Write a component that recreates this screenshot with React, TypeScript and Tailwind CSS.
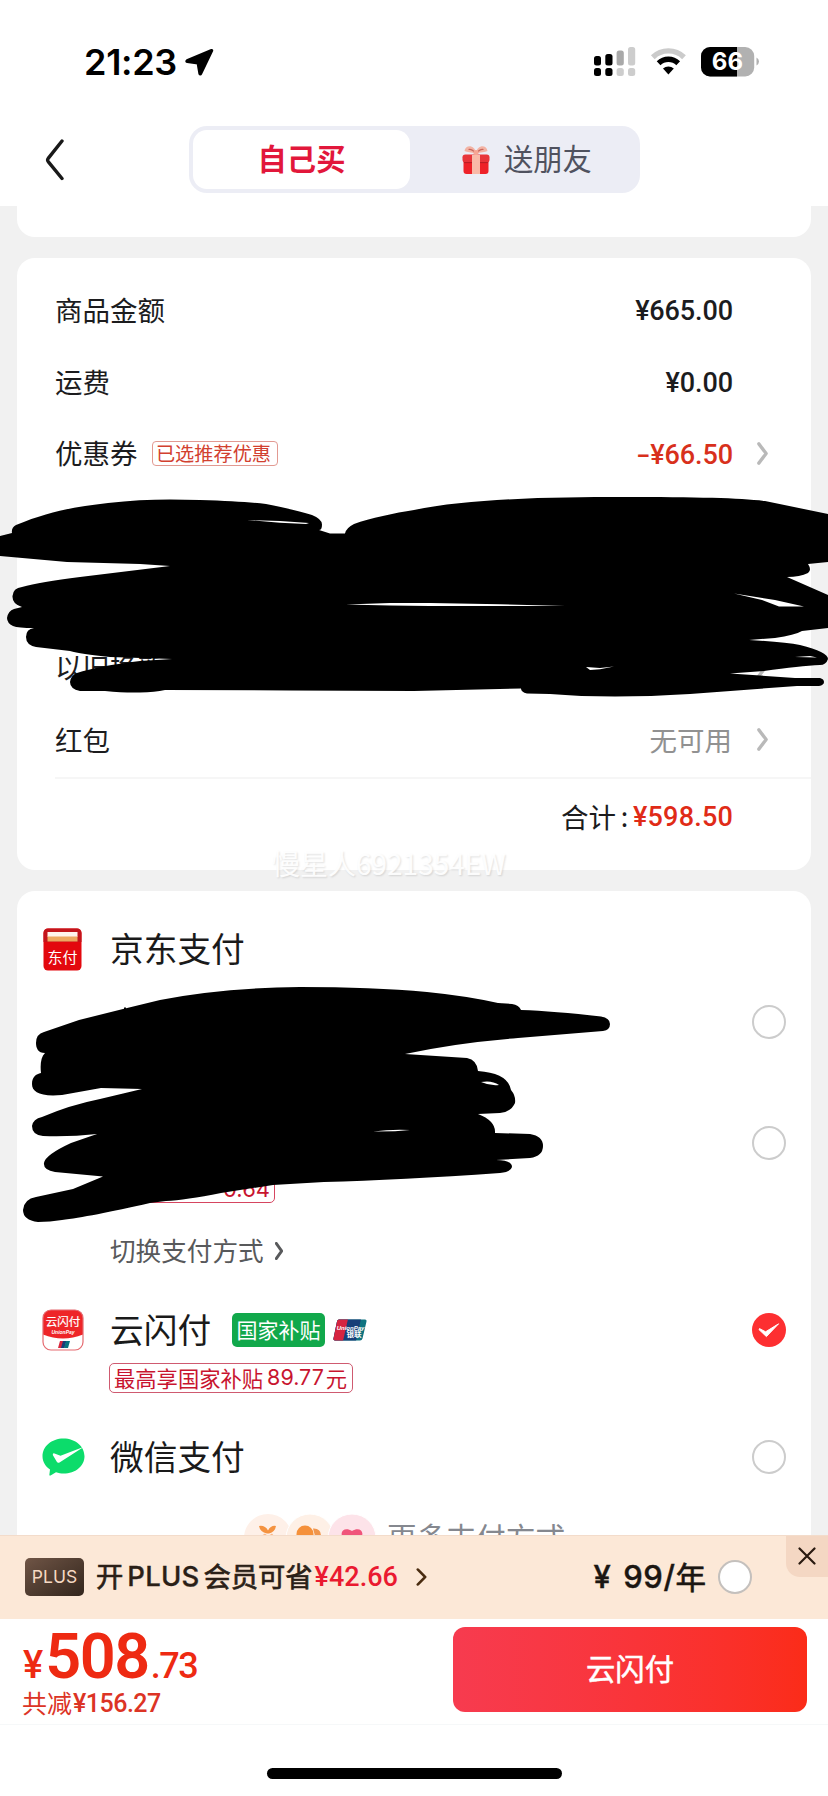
import React from "react";

const CJK = "font-['Noto_Sans_CJK_SC',sans-serif]";
const NUM = "font-['Roboto','Noto_Sans_CJK_SC',sans-serif]";

function Radio({ checked = false }: { checked?: boolean }) {
  if (checked) {
    return (
      <svg className="h-[34px] w-[34px] shrink-0" viewBox="0 0 34 34">
        <circle cx="17" cy="17" r="17" fill="#fd2f31" />
        <path d="M7.500 15.600 13.600 18.800 26.600 10.800 14.400 23.600 7 16.600Z" fill="#fff" stroke="#fff" strokeWidth="1" strokeLinejoin="round" />
      </svg>
    );
  }
  return <span className="h-[34px] w-[34px] shrink-0 rounded-full border-2 border-[#cccccc] bg-white" />;
}

function Chevron({ className, width = 3.6 }: { className: string; width?: number }) {
  return (
    <svg className={className} viewBox="0 0 12 24" fill="none" stroke="currentColor" strokeWidth={width} strokeLinecap="round" strokeLinejoin="round" preserveAspectRatio="none">
      <path d="M2 2 10 12 2 22" />
    </svg>
  );
}

function StatusBar() {
  return (
    <div className="flex h-[106px] items-start justify-between pt-[46px] pl-[84px] pr-[69px]">
      <div className="flex items-center">
        <span className="w-[101px] font-['Inter',sans-serif] text-[36px] leading-[32px] font-semibold tracking-[-0.3px] text-black">21:23</span>
        <svg className="h-[28px] w-[29px]" viewBox="0 0 29 28">
          <path d="M26.500 2.200 2 12.400C1.200 12.900 1.300 13.700 2.200 13.900L12.800 15.200 14.500 25.400C14.700 26.400 15.600 26.500 16 25.700L27 2.800C27.200 2.300 27 2 26.500 2.200Z" fill="#000" stroke="#000" strokeWidth="2.400" strokeLinejoin="round" />
        </svg>
      </div>
      <div className="flex items-start">
        <svg className="h-[32px] w-[165px]" viewBox="594 46 165 32">
          <rect x="594" y="56" width="7" height="9.500" rx="2.500" />
          <rect x="605.300" y="54" width="7.200" height="11.500" rx="2.500" />
          <rect x="616.600" y="50.600" width="7.200" height="14.800" rx="2.500" fill="#a9a9a9" />
          <rect x="628" y="47" width="7.200" height="18.400" rx="2.500" fill="#cdcdcd" />
          <rect x="594" y="68" width="7" height="8" rx="2.500" />
          <rect x="605.300" y="68" width="7.200" height="8" rx="2.500" />
          <rect x="616.600" y="68" width="7.200" height="8" rx="2.500" fill="#cdcdcd" />
          <rect x="628" y="68" width="7.200" height="8" rx="2.500" fill="#cdcdcd" />
          <g fill="none" strokeWidth="5.400">
            <path d="M652.800 57.200A22.500 22.500 0 0 1 684 57.200" stroke="#cbcbcb" />
            <path d="M658.600 63.200A14.200 14.200 0 0 1 678.200 63.200" stroke="#000" />
          </g>
          <path d="M663 68.600A8 8 0 0 1 673.800 68.600L668.400 74.400Z" />
          <clipPath id="batteryLeft"><rect x="701" y="47" width="36" height="30" /></clipPath>
          <rect x="701" y="47" width="53.200" height="29.400" rx="9" fill="#b1b1b1" />
          <rect x="701" y="47" width="53.200" height="29.400" rx="9" clipPath="url(#batteryLeft)" />
          <path d="M756.500 57.500Q759 59 759 61.500T756.500 65.500Z" fill="#b1b1b1" />
          <text x="727.400" y="70.300" textAnchor="middle" fontFamily="Inter, sans-serif" fontWeight="700" fontSize="24" fill="#fff">66</text>
        </svg>
      </div>
    </div>
  );
}

function Gift() {
  return (
    <svg className="h-[30px] w-[28px]" viewBox="0 0 28 30">
      <rect x="1.500" y="14" width="25" height="15" rx="3" fill="#ee2229" />
      <rect x="0.500" y="9.500" width="27" height="8" rx="2.800" fill="#e8353a" />
      <path d="M2 17.600H26" stroke="#b81d24" strokeWidth="1" />
      <rect x="10" y="10" width="8" height="19" fill="#f9b9a8" />
      <path d="M14 8.500C9 7 5 7.500 2.500 6 3 2.500 5 1 8.500 1.200 12 2 13.500 4.500 14 8.500Z" fill="#f3b3a4" />
      <path d="M14 8.500C19 7 23 7.500 25.500 6 25 2.500 23 1 19.500 1.200 16 2 14.500 4.500 14 8.500Z" fill="#f3b3a4" />
      <path d="M14 8.500C11 5 9 4 6.500 4.500M14 8.500C17 5 19 4 21.500 4.500" stroke="#c9665d" strokeWidth="1.200" fill="none" />
      <circle cx="14" cy="7.500" r="2.600" fill="#f6a594" />
    </svg>
  );
}

function NavBar() {
  return (
    <div className="flex h-[100px] items-start pt-[20px] pl-[44px]">
      <svg className="mt-[13px] h-[42px] w-[20px]" viewBox="0 0 20 42" fill="none" stroke="#191919" strokeWidth="3.400" strokeLinecap="round" strokeLinejoin="round">
        <path d="M18 2 4.200 19.400Q3 21 4.200 22.600L18 39.500" />
      </svg>
      <div className={`ml-[125px] flex h-[67px] w-[451px] rounded-[18px] bg-[#ecedf5] p-[4px] text-[29.300px] leading-none ${CJK}`}>
        <div className="flex w-[217px] items-center justify-center rounded-[14px] bg-white pb-[3px] font-bold text-[#e2173b]">自己买</div>
        <div className="flex flex-1 items-center pl-[52px] text-[#50525f]">
          <Gift />
          <span className="ml-[14px] pb-[3px]">送朋友</span>
        </div>
      </div>
    </div>
  );
}

function Row({ label, tag, value, valueClass, arrow = false }: { label: string; tag?: string; value: React.ReactNode; valueClass: string; arrow?: boolean }) {
  return (
    <div className="flex h-[71.700px] items-center pl-[38px]">
      <span className="pb-[2px] text-[27.500px] leading-none text-[#1c1c1e]">{label}</span>
      {tag && <span className="mb-[2px] ml-[14px] flex h-[25px] w-[126px] items-center justify-center rounded-[4px] border border-[#e29a92] pr-[2px] text-[19.200px] leading-none text-[#d2402f]">{tag}</span>}
      <span className={`ml-auto flex leading-none ${valueClass}`}>{value}</span>
      <span className="flex w-[78px] pl-[24px] text-[#b9b9b9]">{arrow && <Chevron className="mb-[2px] h-[23px] w-[11px]" />}</span>
    </div>
  );
}

function Summary() {
  const amount = `${NUM} text-[27px] font-medium pt-[2px]`;
  return (
    <section className="mt-[21px] h-[612px] shrink-0 rounded-[18px] bg-white pt-[17px]">
      <Row label="商品金额" value="¥665.00" valueClass={`${amount} tracking-[-0.100px] text-[#1c1c1e]`} />
      <Row label="运费" value="¥0.00" valueClass={`${amount} tracking-[-0.100px] text-[#1c1c1e]`} />
      <Row
        label="优惠券"
        tag="已选推荐优惠"
        value={<><span className="origin-right scale-x-150">-</span>¥66.50</>}
        valueClass={`${amount} tracking-[-0.100px] text-[#d8301c]`}
        arrow
      />
      <div className="h-[141.400px]" />
      <Row label="以旧换新" value="" valueClass="" arrow />
      <div className="mt-[2px]">
        <Row label="红包" value="无可用" valueClass="text-[27.500px] text-[#919191] pb-[2px] pr-[1px]" arrow />
      </div>
      <div className="ml-[38px] h-[2px] bg-[#f6f6f6]" />
      <div className="flex h-[76px] items-center justify-end pr-[78px] leading-none">
        <span className="pb-[1px] text-[27.500px] text-[#1c1c1e]">合计</span>
        <span className="w-[17px] pb-[3px] text-center text-[27px] text-[#1c1c1e]">:</span>
        <span className={`${amount} tracking-[0.200px] text-[#e02b17]`}>¥598.50</span>
      </div>
    </section>
  );
}

function JdIcon() {
  return (
    <svg className="ml-[1px] h-[43px] w-[39px]" viewBox="0 0 39 43">
      <rect x="0.500" y="0.500" width="38" height="42" rx="4.500" fill="#e3080e" />
      <path d="M0.500 5A4.500 4.500 0 0 1 5 .5H34A4.500 4.500 0 0 1 38.500 5V14H.5Z" fill="#c3141b" />
      <rect x="4.500" y="4" width="30" height="5" fill="#fff3ec" />
      <rect x="4.500" y="8.500" width="30" height="5" fill="#eda861" />
      <text x="19.500" y="34.500" textAnchor="middle" fontFamily="'Noto Sans CJK SC', sans-serif" fontSize="15" fill="#fff">东付</text>
    </svg>
  );
}

function QuickPassIcon() {
  return (
    <svg className="h-[42px] w-[42px]" viewBox="0 0 42 42">
      <clipPath id="qp"><rect x="1" y="1" width="40" height="40" rx="8" /></clipPath>
      <g clipPath="url(#qp)">
        <rect width="42" height="42" fill="#fff" />
        <path d="M0 0H42V25Q21 34 0 25Z" fill="#ee2528" />
        <path d="M18 32H22L20 39H16Z" fill="#d8263c" />
        <path d="M21 32H24.500L22.500 39H19Z" fill="#1b3d78" />
        <path d="M24 32H28L26 39H22Z" fill="#0b7280" />
      </g>
      <rect x="1" y="1" width="40" height="40" rx="8" fill="none" stroke="#e56a70" strokeWidth="1.200" />
      <text x="21" y="17" textAnchor="middle" fontFamily="'Noto Sans CJK SC', sans-serif" fontSize="11.500" fill="#fff" stroke="#fff" strokeWidth="0.200">云闪付</text>
      <text x="21" y="24.500" textAnchor="middle" fontFamily="'Liberation Sans', sans-serif" fontStyle="italic" fontSize="5" fontWeight="700" fill="#fff">UnionPay</text>
    </svg>
  );
}

function UnionPay() {
  return (
    <svg className="h-[22px] w-[34px]" viewBox="0 0 34 22">
      <clipPath id="up"><path d="M6 .5H32Q34 .5 33.500 2.500L29.500 19.500Q29 21.500 27 21.500H2Q0 21.500.5 19.500L4 2.500Q4.400.5 6 .5Z" /></clipPath>
      <g clipPath="url(#up)">
        <rect width="34" height="22" fill="#0e7380" />
        <path d="M0 0H28L23 22H0Z" fill="#173f78" />
        <path d="M0 0H15L10 22H0Z" fill="#d62440" />
      </g>
      <text x="17.500" y="10.500" textAnchor="middle" fontFamily="'Liberation Sans', sans-serif" fontStyle="italic" fontSize="6" fontWeight="700" fill="#fff">UnionPay</text>
      <text x="21" y="18" textAnchor="middle" fontFamily="'Noto Sans CJK SC', sans-serif" fontSize="7.500" fontWeight="700" fill="#fff">银联</text>
    </svg>
  );
}

function WeChatPay() {
  return (
    <svg className="h-[38px] w-[43px]" viewBox="0 0 43 38">
      <path d="M21.500 .5C33.500.5 42.500 8.500 42.500 18.200S33.500 35.500 21.500 35.500C19 35.500 16.500 35.200 14 34.300L8.500 37.500C7.800 37.900 7.200 37.400 7.400 36.600L8 31.500C3.500 28.500.5 23.500.5 18.200.5 8.500 9.500.5 21.500.5Z" fill="#0cdc6b" />
      <path d="M12.500 15.500 18.500 17.700 42 8.800 17.500 24.500Q15.800 25.500 14.800 23.800L10.800 17Q10.600 14.800 12.500 15.500Z" fill="#fff" />
    </svg>
  );
}

function MoreIcons() {
  return (
    <svg className="h-[48px] w-[134px]" viewBox="0 0 134 48">
      <circle cx="24" cy="24" r="24" fill="#fef0e8" />
      <circle cx="66" cy="24" r="24" fill="#fef0e6" stroke="#fff" strokeWidth="1" />
      <circle cx="108" cy="24" r="24" fill="#fde3e9" stroke="#fff" strokeWidth="1" />
      <path d="M15 12Q21 11 24 16.500 27 11 32 12 31 18 25 19.500H23Q16 18 15 12Z" fill="#f49341" />
      <path d="M17 22 21 19.500 24 22 28 19.500 31 23 29 34H19Z" fill="#f9b98a" />
      <circle cx="61" cy="20" r="8.500" fill="#f5913b" />
      <path d="M69 14.500Q77 14 77 22H71Q70 18 69 14.500Z" fill="#f0964d" />
      <path d="M98 22C96 16 102 13 108 17 114 13 120 16 118 22L108 32Z" fill="#f0557a" />
    </svg>
  );
}

function Method({ icon, title, checked, radio = true, children }: { icon: React.ReactNode; title: string; checked?: boolean; radio?: boolean; children?: React.ReactNode }) {
  return (
    <div className="flex h-[44px] items-center pr-[25px]">
      <span className="flex w-[93px] pl-[25px]">{icon}</span>
      <span className="pb-[2px] text-[33.700px] leading-none text-[#1a1a1a]">{title}</span>
      {children}
      <span className="ml-auto flex">{radio && <Radio checked={checked} />}</span>
    </div>
  );
}

function Payments() {
  return (
    <section className="mt-[21px] h-[700px] shrink-0 rounded-[18px] bg-white pt-[36px]">
      <Method icon={<JdIcon />} title="京东支付" radio={false} />
      <div className="mt-[27px] flex h-[47px] items-center justify-end pr-[25px]"><Radio /></div>
      <div className="mt-[74px] flex h-[47px] items-center justify-end pr-[25px]"><Radio /></div>
      <div className="mt-[6px] ml-[92px] flex h-[31px] w-[166px] items-center justify-end rounded-[5px] border border-[#d64560] pt-[3px] pr-[4px] font-['Inter',sans-serif] text-[22px] leading-none text-[#c8142f]">0.64</div>
      <div className="mt-[28px] ml-[93px] flex h-[40px] items-center text-[25.600px] leading-none text-[#58595b]">
        <span className="pb-[2px]">切换支付方式</span>
        <Chevron className="ml-[11px] h-[18px] w-[8px]" width={4.2} />
      </div>
      <div className="mt-[37px]">
        <Method icon={<QuickPassIcon />} title="云闪付" checked>
          <span className="ml-[21px] flex h-[34px] w-[93px] items-center justify-center rounded-[5px] bg-[#11a84b] pb-[1px] text-[21px] leading-none text-white">国家补贴</span>
          <span className="ml-[8px]"><UnionPay /></span>
        </Method>
      </div>
      <div className="mt-[11px] ml-[92px] flex h-[30px] w-[244px] items-center rounded-[5px] border border-[#cf5a70] pl-[4px] text-[21.300px] leading-none text-[#c8142f]">
        最高享国家补贴
        <span className="mr-[2px] ml-[4px] font-['Inter',sans-serif] text-[21.500px]">89.77</span>元
      </div>
      <div className="mt-[42px]">
        <Method icon={<WeChatPay />} title="微信支付" />
      </div>
      <div className="mt-[35px] ml-[227px] flex h-[48px] items-center">
        <MoreIcons />
        <span className="ml-[9px] pb-[3px] text-[29.700px] leading-none text-[#85888f]">更多支付方式</span>
      </div>
    </section>
  );
}

function PlusBar() {
  return (
    <div className="relative flex h-[84px] items-center border-t border-[#f3dccb] bg-[#fce8d7] pl-[25px]">
      <span className="mb-[2px] flex h-[38px] w-[59px] items-center justify-center rounded-[5px] bg-linear-to-br from-[#705546] to-[#33261d] font-['Inter',sans-serif] text-[17.500px] leading-none text-[#f6d9c3]">PLUS</span>
      <span className={`ml-[12px] flex items-center pb-[3px] text-[27.300px] leading-none text-[#2b1f17] [-webkit-text-stroke:0.700px_#2b1f17] ${CJK}`}>
        开<span className="mt-[2px] mr-[4px] ml-[4px] font-['Inter',sans-serif] text-[27.500px] font-medium tracking-[0.200px] [-webkit-text-stroke:0.300px_#2b1f17]">PLUS</span>会员可省
      </span>
      <span className={`ml-[2px] text-[27px] leading-none font-medium text-[#ea1a30] ${NUM}`}>¥42.66</span>
      <Chevron className="mb-[2px] ml-[18px] h-[18px] w-[11px] text-[#4a2c10]" width={3} />
      <span className={`ml-auto flex items-center pb-[3px] text-[30.500px] leading-none text-[#1b1612] [-webkit-text-stroke:0.700px_#1b1612] ${CJK}`}>
        <span className="mt-[1px] font-['Inter','Noto_Sans_CJK_SC',sans-serif] text-[31px] font-medium tracking-[0.600px] whitespace-pre [word-spacing:3px] [-webkit-text-stroke:0.400px_#1b1612]">¥ 99/</span>年
      </span>
      <span className="mr-[76px] mb-[2px] ml-[12px] h-[34px] w-[34px] rounded-full border-2 border-[#c4c0bd] bg-white" />
      <span className="absolute top-0 right-0 flex h-[41px] w-[42px] items-center justify-center rounded-bl-[14px] bg-[#f4d7c3] pb-[2px]">
        <svg className="h-[18px] w-[18px]" viewBox="0 0 18 18" stroke="#2a1a10" strokeWidth="2.200" strokeLinecap="round">
          <path d="M1.500 1.500 16.500 16.500M16.500 1.500 1.500 16.500" />
        </svg>
      </span>
    </div>
  );
}

function Checkout() {
  return (
    <div className="flex h-[106px] justify-between border-b border-[#f6f8f9] bg-white pr-[21px] pl-[22px]">
      <div className="pt-[15px]">
        <div className={`flex h-[46px] items-baseline pl-[1px] font-medium text-[#ee2a12] ${NUM}`}>
          <span className="text-[38px] leading-[46px]">¥</span>
          <span className="ml-[2px] text-[63px] leading-[46px] font-semibold tracking-[-1.500px]">508</span>
          <span className="ml-[2px] text-[36px] leading-[46px] tracking-[-1.500px]">.73</span>
        </div>
        <div className="mt-[9px] flex h-[28px] items-center leading-none text-[#dc3425]">
          <span className={`pb-[2px] text-[25px] ${CJK}`}>共减</span>
          <span className={`ml-[1px] text-[25px] font-medium tracking-[-0.500px] ${NUM}`}>¥156.27</span>
        </div>
      </div>
      <button className={`mt-[8px] flex h-[85px] w-[354px] items-center justify-center rounded-[12px] bg-linear-to-r from-[#f73b4f] to-[#fb2c18] pb-[3px] text-[29.300px] leading-none text-white [-webkit-text-stroke:0.500px_white] ${CJK}`}>云闪付</button>
    </div>
  );
}

function Redaction() {
  return (
    <svg className="pointer-events-none absolute top-0 left-0 h-[1796px] w-[828px]" viewBox="0 0 828 1796">
      <path d="M0 536 12 533Q11 528 16 525C50 511 75 507 108 503 140 499 170 499 200 500 230 501 250 502 266 504 285 508 300 511 312 515Q322 519 322 524.500T319 530L330 533.500H345Q346 528 354 524C370 518 395 513 414 510 470 498 560 497 620 497 700 497 740 498 765 501L828 514V562L808 564Q812 570 808 573 800 577 787 577L828 595V628L802 631Q795 635 775 638L749 640Q785 642 800 645 828 652 828 659 826 665 820 665 800 666 764 671L730 673.500 795 678H820Q824 679 824 682T819 686H797L690 694Q610 699 550 694L527 693.500Q521 692 521 688.500L414 691 290 690.500 165 690Q155 692 140 692.500T105 691H80Q70 689 70 682 71 675 77 673 98 666 140 661L172 659 110 657Q80 654 70 651L36 647Q26 645 26 637 26 629 34 628 18 628 13 626 7 623 7 618 8 611 14 609L22 607Q12 604 12.500 596T22 587Q40 582 80 577L170 566 140 564 67 562 0 556Z" />
      <path d="M45 1053C38 1053 36 1048 36 1043Q36 1034 44 1032L79 1020 123 1009 160 1000Q221 988 300 987 372 987 427 992 467 996 498 1003L512 1004Q519 1005 521 1010 554 1011 601 1016.500 610 1018 610 1024T603 1031L518 1038Q455 1043 405 1054L467 1058Q477 1060 478 1071 508 1073 511 1090 516 1096 515 1103 511 1112 500 1113L478 1114Q496 1121 495 1133L530 1134Q543 1136 543 1146T530 1158L496 1160Q512 1160 512 1167 511 1172 500 1173 400 1180 324 1182L273 1185 221 1193Q185 1200 166 1201L150 1203C110 1212 80 1218 62 1220Q50 1222 38 1222 23 1220 23 1210 24 1199 36 1197L73 1189 103 1176.500 55 1172Q43 1170 44 1163 45 1155 71 1143L97 1134Q70 1137 43 1136 32 1135 32 1126 33 1119 42 1117 70 1105 100 1099L142 1089 101 1088 62 1095C40 1097 32 1092 32 1084 32 1077 36 1074 41 1073 40 1064 41 1057 45 1053Z" />
      <path d="M124 1007.500H126V1011H124Z" />
      <g fill="#fff">
        <path d="M247 520 280 521 309 523 306 524 280 522.800Z" />
        <path d="M346 604.600 390 603 430 603 500 604.200 565 606 430 606 390 605.600Z" />
        <path d="M734 593.500 775 600 804 606.500H779L762 600Z" />
        <path d="M795 657 810 656 817 657.600Z" />
        <path d="M586 667 600 668 614 666.500 600 669.300 590 670Z" />
        <path d="M481 1082Q492 1080 499 1085 490 1086 481 1082Z" />
        <path d="M373 1131.500Q392 1129 410 1130L395 1131.200Z" />
      </g>
    </svg>
  );
}

export default function App() {
  return (
    <div className={`relative flex h-[1796px] w-[828px] flex-col overflow-hidden bg-white ${CJK}`}>
      <StatusBar />
      <NavBar />
      <main className="flex h-[1329px] flex-col overflow-hidden bg-[#f1f1f1] px-[17px]">
        <section className="h-[31px] shrink-0 rounded-b-[18px] bg-white" />
        <Summary />
        <Payments />
      </main>
      <PlusBar />
      <Checkout />
      <div className="flex h-[71px] justify-center pt-[43px]">
        <div className="h-[11px] w-[295px] rounded-full bg-black" />
      </div>
      <div className="absolute top-[848px] left-[272px] text-[28px] leading-[30px] whitespace-nowrap text-white/90 [text-shadow:1px_1px_2px_rgba(0,0,0,0.13)]">慢星人6921354EW</div>
      <Redaction />
    </div>
  );
}
